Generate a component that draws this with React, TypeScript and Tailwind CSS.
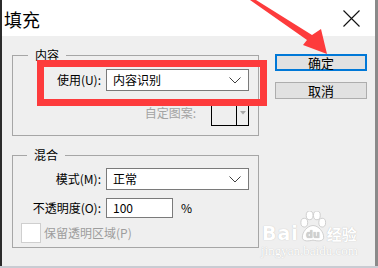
export default function App() {
  const chevron = (
    <svg width="12" height="7" viewBox="0 0 12 7">
      <polyline points="0.5,0.5 6,6 11.5,0.5" fill="none" stroke="#404040" strokeWidth="1" />
    </svg>
  );
  return (
    <div className="relative w-[378px] h-[268px] flex flex-col bg-[#c9ccd3] font-['Noto_Sans_CJK_SC',sans-serif] text-[12px] text-black overflow-hidden">
      <div className="flex h-[266px]">
        <div className="w-[2px] bg-[#2b2b2b]" />
        <div className="w-[373px] flex flex-col bg-[#efefef]">
          {/* title bar */}
          <div className="h-[36px] bg-white flex items-center justify-between pl-[2px] pr-[15px]">
            <span className="text-[18px] leading-[20px] mt-[1px]">填充</span>
            <svg width="17" height="17" viewBox="0 0 17 17" className="mt-[1px]">
              <path d="M0.5 0.5 L16.5 16.5 M16.5 0.5 L0.5 16.5" stroke="#111" strokeWidth="1.1" />
            </svg>
          </div>
          {/* body */}
          <div className="flex pl-[10px]">
            <div className="w-[247px] pt-[19px] flex flex-col">
              {/* group 1 */}
              <div className="h-[81px] border border-[#a6a6a6] flex flex-col">
                <span className="block w-fit ml-[15px] px-[7px] -mt-[9px] leading-[16px] bg-[#efefef]">内容</span>
                <div className="flex items-center mt-[6px]">
                  <span className="w-[88px] text-right leading-[16px]">使用(U):</span>
                  <div className="ml-[5px] w-[143px] h-[22px] border border-[#7a7a7a] bg-white flex items-center justify-between pl-[6px] pr-[7px]">
                    <span className="leading-[16px]">内容识别</span>
                    {chevron}
                  </div>
                </div>
                <div className="flex items-center justify-end pr-[9px] mt-[9px] gap-[15px]">
                  <span className="text-[#a3a3a3] leading-[16px]">自定图案:</span>
                  <div className="w-[38px] h-[26px] border border-black flex">
                    <div className="flex-1" />
                    <div className="w-[12px] border-l border-black flex items-center justify-center">
                      <svg width="6" height="4" viewBox="0 0 6 4">
                        <polygon points="0,0 6,0 3,3.5" fill="#a8a8a8" />
                      </svg>
                    </div>
                  </div>
                </div>
              </div>
              {/* group 2 */}
              <div className="mt-[19px] h-[93px] border border-[#a6a6a6] flex flex-col">
                <span className="block w-fit ml-[14px] px-[7px] -mt-[9px] leading-[16px] bg-[#efefef]">混合</span>
                <div className="flex items-center mt-[5px]">
                  <span className="w-[88px] text-right leading-[16px]">模式(M):</span>
                  <div className="ml-[5px] w-[143px] h-[22px] border border-[#7a7a7a] bg-white flex items-center justify-between pl-[6px] pr-[7px]">
                    <span className="leading-[16px]">正常</span>
                    {chevron}
                  </div>
                </div>
                <div className="flex items-center mt-[8px]">
                  <span className="w-[88px] text-right leading-[16px]">不透明度(O):</span>
                  <div className="ml-[5px] w-[67px] h-[20px] border border-[#7a7a7a] bg-white flex items-center pl-[6px]">
                    <span className="leading-[16px]">100</span>
                  </div>
                  <span className="ml-[8px] leading-[16px]">%</span>
                </div>
                <div className="flex items-center mt-[5px] ml-[8px]">
                  <div className="w-[20px] h-[20px] border border-[#cfcfcf] bg-white" />
                  <span className="ml-[3px] text-[#9d9d9d] leading-[16px]">保留透明区域(P)</span>
                </div>
              </div>
            </div>
            {/* buttons */}
            <div className="ml-[16px] pt-[18px] flex flex-col">
              <div className="w-[92px] h-[17px] border-2 border-[#0078d7] bg-[#e1e1e1] flex items-center justify-center text-[13px] leading-[13px]">
                确定
              </div>
              <div className="mt-[11px] w-[92px] h-[17px] border border-[#adadad] bg-[#e1e1e1] flex items-center justify-center text-[13px] leading-[13px]">
                取消
              </div>
            </div>
          </div>
        </div>
        <div className="w-[3px] bg-[#8a8a8a]" />
      </div>

      {/* red annotation box */}
      <div className="absolute left-[37px] top-[60px] w-[230px] h-[46px] border-[7px] border-[#fd3b3c]" />

      {/* red arrow */}
      <svg className="absolute left-0 top-0" width="378" height="268" viewBox="0 0 378 268">
        <polygon points="250,0 256,0 312,35 321,29 327,54 303,45 307,40" fill="#fd3b3c" />
      </svg>

      {/* baidu watermark */}
      <div className="absolute left-[261px] top-[211px] flex flex-col items-center text-white [text-shadow:0_0_1px_#b5b5b5]">
        <div className="flex items-end h-[32px]">
          <span className="font-['DejaVu_Sans',sans-serif] font-bold text-[19px] leading-[17px] tracking-[1px] mb-[1px]">Bai</span>
          <svg width="28" height="32" viewBox="0 0 28 33">
            <g fill="#ffffff" stroke="#c4c4c4" strokeWidth="0.8">
              <ellipse cx="5" cy="12" rx="3.5" ry="4.5" />
              <ellipse cx="10.5" cy="4.5" rx="3.5" ry="4.5" />
              <ellipse cx="18" cy="4.5" rx="3.5" ry="4.5" />
              <ellipse cx="23.5" cy="12" rx="3.5" ry="4.5" />
              <path d="M14 15 C 8 15, 3 22, 3 27 C 3 32, 10 31, 14 30 C 18 31, 25 32, 25 27 C 25 22, 20 15, 14 15 Z" />
            </g>
            <text x="14" y="28" textAnchor="middle" fontSize="10" fontFamily="DejaVu Sans, sans-serif" fontWeight="bold" fill="#d0d0d0">du</text>
          </svg>
          <span className="text-[15px] leading-[17px] font-bold mb-[1px]">经验</span>
        </div>
        <span className="mt-[1px] font-['Liberation_Serif',serif] text-[13px] leading-[13px]">jingyan.baidu.com</span>
      </div>
    </div>
  );
}
